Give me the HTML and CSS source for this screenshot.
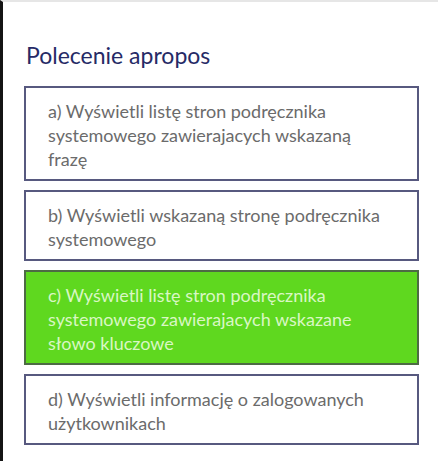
FILE: index.html
```html
<!DOCTYPE html>
<html lang="pl">
<head>
<meta charset="utf-8">
<link rel="stylesheet" href="styles.css">
</head>
<body>
<div class="frame">
  <main class="panel">
    <h1 class="title">Polecenie apropos</h1>
    <ul class="options">
      <li class="option">a) Wyświetli listę stron podręcznika systemowego zawierajacych wskazaną frazę</li>
      <li class="option">b) Wyświetli wskazaną stronę podręcznika systemowego</li>
      <li class="option option--correct">c) Wyświetli listę stron podręcznika systemowego zawierajacych wskazane słowo kluczowe</li>
      <li class="option">d) Wyświetli informację o zalogowanych użytkownikach</li>
    </ul>
  </main>
</div>
</body>
</html>
```

FILE: styles.css
```css
html, body {
  margin: 0;
  padding: 0;
  background: #ffffff;
}

.frame {
  width: 438px;
  height: 461px;
  box-sizing: border-box;
  border-left: 3px solid #141414;
  border-top: 2px solid #e6e6e6;
  overflow: hidden;
}

.panel {
  padding: 38px 19px 0 21px;
  font-family: Lato, "Open Sans", sans-serif;
}

.title {
  margin: 0 0 16px 2px;
  font-size: 23px;
  font-weight: 400;
  line-height: 30px;
  color: #262a66;
}

.options {
  list-style: none;
  margin: 0;
  padding: 0;
  display: flex;
  flex-direction: column;
  gap: 9px;
}

.option {
  border: 2px solid #57597f;
  padding: 11px 29px 8px 22px;
  font-size: 18px;
  line-height: 24px;
  color: #6b6b6b;
  background: #ffffff;
}

.option--correct {
  background: #5fd81f;
  border-color: #4d6b44;
  color: #d9f7c4;
}
```
